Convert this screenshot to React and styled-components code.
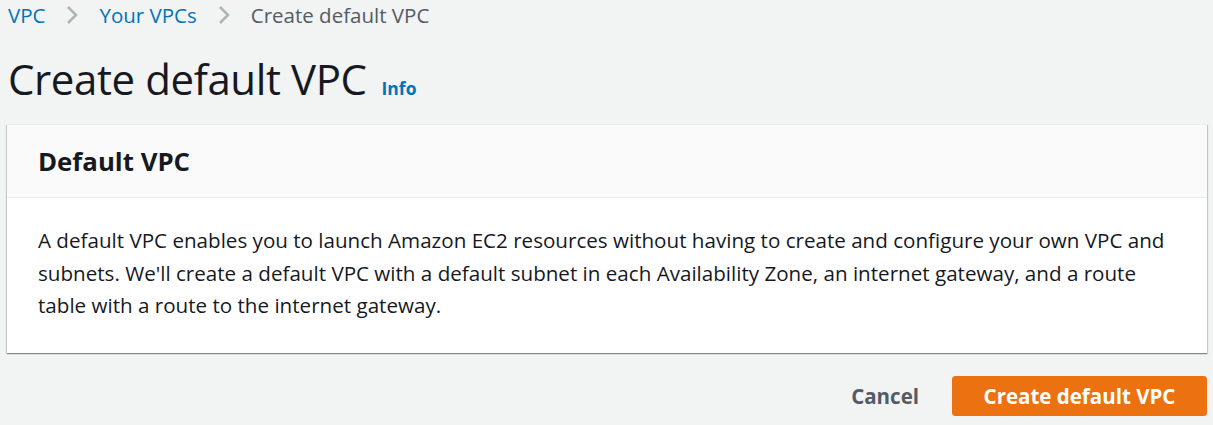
import React from "react";
import styled, { createGlobalStyle } from "styled-components";

const Global = createGlobalStyle`
  html, body { margin: 0; padding: 0; background: #f2f3f3; }
  body { font-family: "Open Sans", "Noto Sans", sans-serif; color: #16191f; }
  * { box-sizing: border-box; }
`;

const Page = styled.div`
  padding: 0 6px 0 7px;
  display: flex;
  flex-direction: column;
`;

const Breadcrumbs = styled.nav`
  display: flex;
  align-items: center;
  height: 29px;
  padding-left: 1px;
  font-size: 20.5px;
`;

const Crumb = styled.a`
  color: ${(p) => (p.$current ? "#545b64" : "#0073bb")};
  text-decoration: none;
  white-space: nowrap;
`;

const Sep = styled.span`
  display: inline-flex;
  margin: 0 21px 0 21px;
  color: #aab7b8;
`;

const TitleRow = styled.div`
  display: flex;
  align-items: baseline;
  margin-top: 19px;
  padding-left: 1px;
`;

const Title = styled.h1`
  margin: 0;
  font-size: 42px;
  font-weight: 400;
  line-height: 62px;
  letter-spacing: -0.4px;
`;

const InfoLink = styled.a`
  margin-left: 15px;
  font-size: 17.5px;
  font-weight: 700;
  color: #0073bb;
  text-decoration: none;
`;

const Panel = styled.section`
  margin-top: 14px;
  background: #fff;
  box-shadow: 0 1px 1px 0 rgba(0, 28, 36, 0.3), 1px 1px 1px 0 rgba(0, 28, 36, 0.15),
    -1px 1px 1px 0 rgba(0, 28, 36, 0.15);
  border-top: 1px solid #eaeded;
`;

const PanelHeader = styled.header`
  background: #fafafa;
  border-bottom: 1px solid #eaeded;
  height: 73px;
  display: flex;
  align-items: center;
  padding: 0 31px;
`;

const PanelTitle = styled.h2`
  margin: 0;
  font-size: 25.8px;
  font-weight: 700;
`;

const PanelBody = styled.div`
  padding: 26px 31px 31px;
  font-size: 20.6px;
  line-height: 32.5px;
`;

const Actions = styled.div`
  display: flex;
  justify-content: flex-end;
  align-items: center;
  gap: 32px;
  margin-top: 23px;
`;

const Button = styled.button`
  font-family: inherit;
  font-size: 20.5px;
  font-weight: 700;
  border-radius: 3px;
  height: 40px;
  cursor: pointer;
  border: 1px solid ${(p) => (p.$primary ? "#ec7211" : "transparent")};
  background: ${(p) => (p.$primary ? "#ec7211" : "transparent")};
  color: ${(p) => (p.$primary ? "#fff" : "#545b64")};
  padding: ${(p) => (p.$primary ? "0 30px" : "0")};
  min-width: ${(p) => (p.$primary ? "255px" : "0")};
`;

const Chevron = () => (
  <svg width="12" height="20" viewBox="0 0 12 20" fill="none">
    <path d="M2 2l8 8-8 8" stroke="currentColor" strokeWidth="2.5" />
  </svg>
);

export default function App() {
  return (
    <>
      <Global />
      <Page>
        <Breadcrumbs>
          <Crumb href="#">VPC</Crumb>
          <Sep><Chevron /></Sep>
          <Crumb href="#">Your VPCs</Crumb>
          <Sep><Chevron /></Sep>
          <Crumb $current>Create default VPC</Crumb>
        </Breadcrumbs>
        <TitleRow>
          <Title>Create default VPC</Title>
          <InfoLink href="#">Info</InfoLink>
        </TitleRow>
        <Panel>
          <PanelHeader>
            <PanelTitle>Default VPC</PanelTitle>
          </PanelHeader>
          <PanelBody>
            A default VPC enables you to launch Amazon EC2 resources without having to create and
            configure your own VPC and subnets. We'll create a default VPC with a default subnet in
            each Availability Zone, an internet gateway, and a route table with a route to the
            internet gateway.
          </PanelBody>
        </Panel>
        <Actions>
          <Button>Cancel</Button>
          <Button $primary>Create default VPC</Button>
        </Actions>
      </Page>
    </>
  );
}
